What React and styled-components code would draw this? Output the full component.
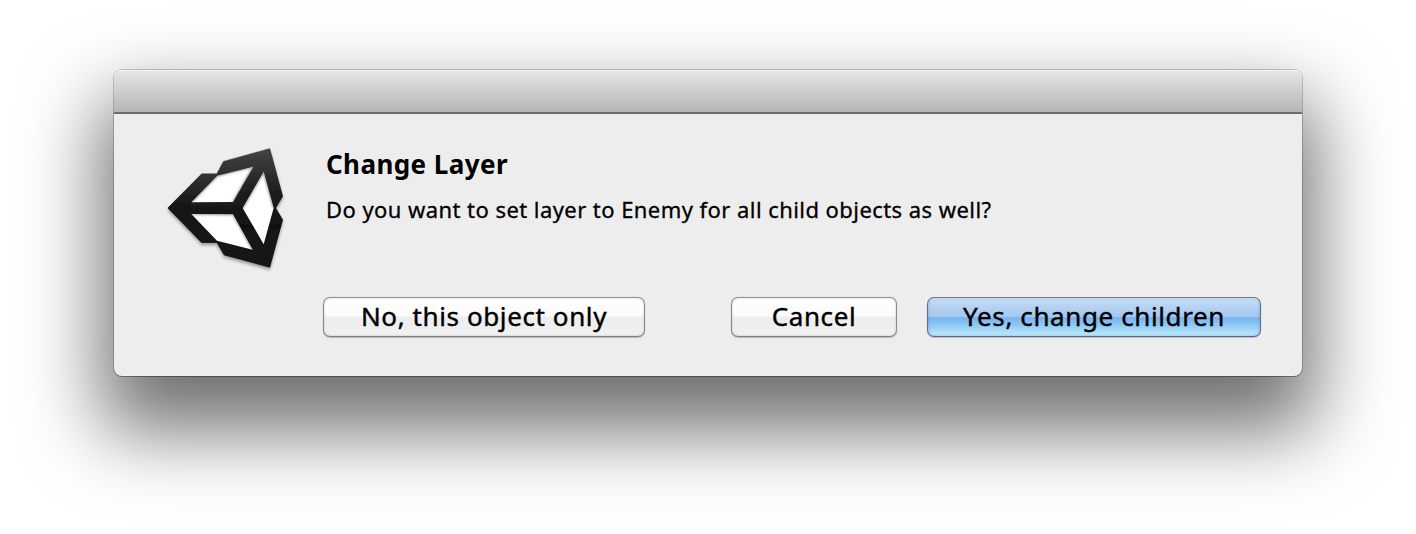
import React from "react";
import styled, { createGlobalStyle, css } from "styled-components";

const GlobalStyle = createGlobalStyle`
  * { box-sizing: border-box; }
  body { margin: 0; background: #fff; overflow: hidden; }
`;

const Desktop = styled.main`
  width: 1416px;
  height: 534px;
  padding: 70px 114px 0;
  overflow: hidden;
  background: #fff;
  color: #000;
  font-family: "Lucida Grande", "Noto Sans", "Open Sans", sans-serif;
`;

const Dialog = styled.section`
  width: 1188px;
  height: 306px;
  border-radius: 8px;
  background: #ededed;
  box-shadow:
    0 0 0 1px rgba(0, 0, 0, 0.2),
    0 1px 0 0 rgba(0, 0, 0, 0.2),
    0 42px 78px 13px rgba(0, 0, 0, 0.56);
`;

const TitleBar = styled.header`
  height: 44px;
  border-radius: 8px 8px 0 0;
  border-bottom: 2px solid #6b6b6b;
  background: linear-gradient(#e7e7e7, #b5b5b5);
  box-shadow: inset 0 1px 0 #f3f3f3;
`;

const Content = styled.div`
  display: flex;
  align-items: flex-start;
  padding: 24px 41px 0;
`;

const Logo = styled.svg`
  flex: none;
  width: 145px;
  height: 140px;
  overflow: visible;
`;

const Message = styled.div`
  padding: 8px 0 0 26px;
  white-space: nowrap;
`;

const Title = styled.h1`
  margin: 0;
  font-size: 26px;
  font-weight: 700;
  line-height: 36px;
  letter-spacing: ${(p) => p.$tracking};
`;

const Question = styled.p`
  margin: 12px 0 0;
  font-size: 22px;
  line-height: 30px;
  letter-spacing: ${(p) => p.$tracking};
  -webkit-text-stroke: 0.3px #000;
`;

const Actions = styled.footer`
  display: flex;
  padding: 19px 41px 0 209px;
`;

const primary = css`
  border-color: #6c7394 #646a8c #5c6286;
  background: linear-gradient(#c8dcf4 0%, #a3c8f0 49%, #78b2ee 52%, #94cdf6 75%, #c2edfa 100%);
  box-shadow: inset 0 1px 1px rgba(255, 255, 255, 0.4), inset 0 0 3px rgba(50, 80, 150, 0.4), 0 1px 1px rgba(0, 0, 0, 0.2);
`;

const Button = styled.button`
  flex: none;
  width: ${(p) => p.$width}px;
  height: 40px;
  margin: 0 0 0 ${(p) => p.$gap || 0}px;
  padding: 0 0 2px;
  border: 1px solid;
  border-color: #949494 #8c8c8c #808080;
  border-radius: 7px;
  background: linear-gradient(#fff 0%, #fbfbfb 46%, #ededed 52%, #f1f1f1 100%);
  box-shadow: inset 0 0 2px rgba(0, 0, 0, 0.25), 0 0 1px rgba(0, 0, 0, 0.25), 0 1px 1px rgba(0, 0, 0, 0.2);
  color: #000;
  font-family: inherit;
  font-size: 26px;
  line-height: 36px;
  letter-spacing: ${(p) => p.$tracking};
  -webkit-text-stroke: 0.4px #000;
  white-space: nowrap;
  ${(p) => p.$primary && primary}
`;

function CubeLogo() {
  return (
    <Logo viewBox="0 0 435 420" aria-label="Unity">
      <defs>
        <linearGradient id="body" x1="0" y1="0" x2="0" y2="1">
          <stop offset="0" stopColor="#444" />
          <stop offset=".35" stopColor="#202020" />
          <stop offset=".65" stopColor="#111" />
          <stop offset="1" stopColor="#191919" />
        </linearGradient>
        <linearGradient id="side" x1="0" y1="0" x2="0" y2="1">
          <stop offset="0" stopColor="#333" />
          <stop offset=".45" stopColor="#171717" />
          <stop offset="1" stopColor="#171717" />
        </linearGradient>
        <filter id="drop" x="-10%" y="-10%" width="120%" height="125%">
          <feDropShadow dx="0" dy="7" stdDeviation="5" floodOpacity=".35" />
        </filter>
        <filter id="soft"><feGaussianBlur stdDeviation="3" /></filter>
        <clipPath id="faces">
          <path d="M109 193 187 113 295 86 234 192ZM109 228 234 229 293 335 186 308ZM263 210 326 101 356 210 326 319Z" />
        </clipPath>
      </defs>
      <g filter="url(#drop)">
        <path fill="url(#body)" d="M38 210 140 107H185L205 70 345 31 384 175 363 210 384 245 345 389 207 352 185 314H140Z" />
        <path fill="url(#side)" d="M38 210 140 107H192L109 193 100 210 109 228 192 314H140Z" />
      </g>
      <path fill="none" stroke="#777" strokeWidth="2" opacity=".6" d="M140 107H185L205 70 345 31" />
      <path fill="#fff" d="M109 193 187 113 295 86 234 192ZM109 228 234 229 293 335 186 308ZM263 210 326 101 356 210 326 319Z" />
      <g clipPath="url(#faces)">
        <path fill="none" stroke="#000" strokeOpacity=".45" strokeWidth="5" filter="url(#soft)" d="M109 193 187 113 295 86 234 192M109 228 234 229 293 335M263 210 326 101 356 210" />
      </g>
    </Logo>
  );
}

export default function App() {
  return (
    <>
      <GlobalStyle />
      <Desktop>
        <Dialog role="dialog" aria-labelledby="dialog-title">
          <TitleBar />
          <Content>
            <CubeLogo />
            <Message>
              <Title id="dialog-title" $tracking="0.42px">Change Layer</Title>
              <Question $tracking="0.44px">Do you want to set layer to Enemy for all child objects as well?</Question>
            </Message>
          </Content>
          <Actions>
            <Button $width={322} $tracking="0.6px">No, this object only</Button>
            <Button $width={166} $gap={86} $tracking="0.6px">Cancel</Button>
            <Button $width={334} $gap={30} $tracking="0.6px" $primary>Yes, change children</Button>
          </Actions>
        </Dialog>
      </Desktop>
    </>
  );
}
